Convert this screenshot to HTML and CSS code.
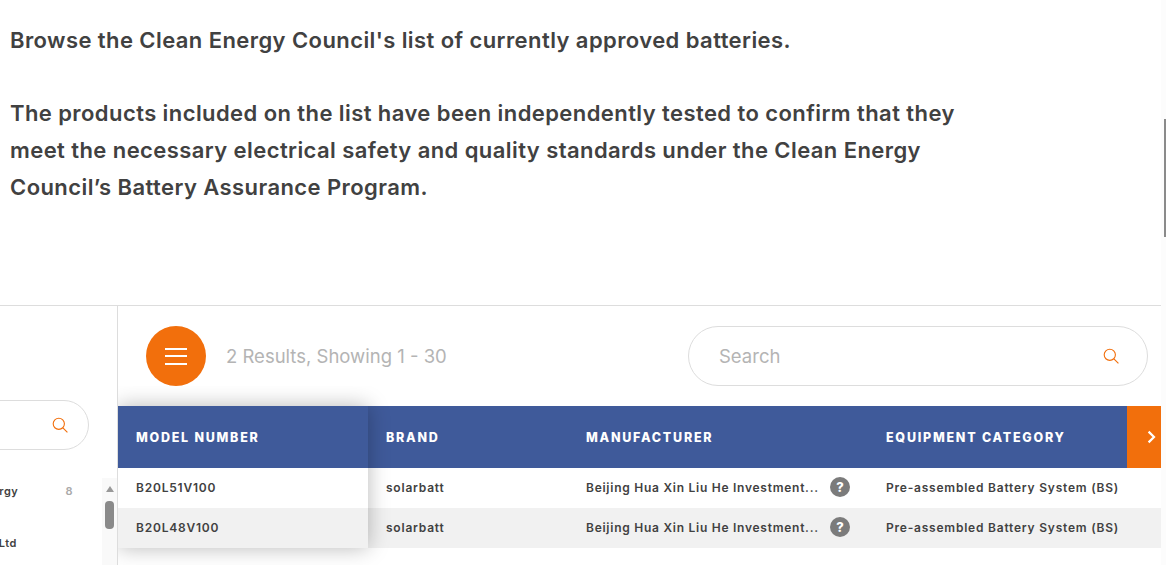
FILE: index.html
```html
<!DOCTYPE html>
<html lang="en">
<head>
<meta charset="utf-8">
<title>Approved batteries</title>
<link rel="stylesheet" href="styles.css">
</head>
<body>
<section class="intro">
  <p>Browse the Clean Energy Council's list of currently approved batteries.</p>
  <p>The products included on the list have been independently tested to confirm that they<br>meet the necessary electrical safety and quality standards under the Clean Energy<br>Council’s Battery Assurance Program.</p>
</section>
<section class="browser">
  <aside class="filters">
    <div class="filter-search">
      <div class="pill pill-left">
        <svg class="search-icon" viewBox="0 0 16 16"><circle cx="6.8" cy="6.8" r="5.6"/><path d="M10.9 10.9 15.4 15.4"/></svg>
      </div>
    </div>
    <div class="filter-body">
      <ul class="filter-list">
        <li class="filter-item"><span class="filter-name">Energy</span><span class="filter-count">8</span></li>
        <li class="filter-item filter-item-second"><span class="filter-name">Co Ltd</span></li>
      </ul>
      <div class="mini-scroll">
        <span class="mini-arrow"></span>
        <span class="mini-thumb"></span>
      </div>
    </div>
  </aside>
  <div class="results">
    <div class="toolbar">
      <div class="toolbar-left">
        <button class="menu-btn" aria-label="Menu"><span></span><span></span><span></span></button>
        <span class="count">2 Results, Showing 1 - 30</span>
      </div>
      <div class="pill pill-main">
        <span class="placeholder">Search</span>
        <svg class="search-icon" viewBox="0 0 16 16"><circle cx="6.8" cy="6.8" r="5.6"/><path d="M10.9 10.9 15.4 15.4"/></svg>
      </div>
    </div>
    <div class="table">
      <div class="row head">
        <div class="cell c1">MODEL NUMBER</div>
        <div class="cell c2">BRAND</div>
        <div class="cell c3">MANUFACTURER</div>
        <div class="cell c4">EQUIPMENT CATEGORY</div>
        <div class="next"><svg viewBox="0 0 10 14"><path d="M1.6 1.6 7 7 1.6 12.4"/></svg></div>
      </div>
      <div class="row">
        <div class="cell c1">B20L51V100</div>
        <div class="cell c2">solarbatt</div>
        <div class="cell c3"><span class="clip">Beijing Hua Xin Liu He Investment...</span><span class="help">?</span></div>
        <div class="cell c4">Pre-assembled Battery System (BS)</div>
      </div>
      <div class="row alt">
        <div class="cell c1">B20L48V100</div>
        <div class="cell c2">solarbatt</div>
        <div class="cell c3"><span class="clip">Beijing Hua Xin Liu He Investment...</span><span class="help">?</span></div>
        <div class="cell c4">Pre-assembled Battery System (BS)</div>
      </div>
      <div class="frozen-shadow"></div>
    </div>
  </div>
</section>
<div class="page-track"><div class="page-thumb"></div></div>
</body>
</html>
```
FILE: styles.css
```css
* { box-sizing: border-box; }
html, body { margin: 0; height: 565px; overflow: hidden; background: #fff; }
body { font-family: "Inter", "Liberation Sans", sans-serif; color: #414141; }

.intro { height: 305px; padding: 22px 0 0 10px; font-size: 22px; line-height: 37px; font-weight: 600; letter-spacing: .42px; }
.intro p { margin: 0 0 36px; }

.browser { display: flex; height: 260px; border-top: 1px solid #ddd; }

.filters { width: 118px; flex: none; border-right: 1px solid #ddd; overflow: hidden; padding-top: 94px; }
.filter-search { display: flex; justify-content: flex-end; padding-right: 28px; }
.pill { display: flex; align-items: center; justify-content: space-between; background: #fff; border: 1px solid #ddd; }
.pill-left { width: 200px; height: 50px; flex: none; border-radius: 25px; justify-content: flex-end; padding-right: 20px; }
.search-icon { width: 16px; height: 16px; fill: none; stroke: #f26f0c; stroke-width: 1.1; }

.filter-body { display: flex; height: 87px; margin-top: 28px; justify-content: flex-end; }
.filter-list { list-style: none; margin: 0; padding: 0; width: 102px; flex: none; overflow: hidden; }
.filter-item { display: flex; justify-content: flex-end; height: 26px; margin-bottom: 26px; padding-right: 29px; align-items: center; font-size: 11px; font-weight: 600; white-space: nowrap; letter-spacing: .55px; }
.filter-item-second { padding-right: 85px; }
.filter-name { flex: none; }
.filter-count { flex: none; margin-left: 47px; color: #aaa; }
.mini-scroll { width: 15px; flex: none; background: #f9f9f9; display: flex; flex-direction: column; align-items: center; padding-top: 8px; }
.mini-arrow { width: 0; height: 0; border-left: 4.5px solid transparent; border-right: 4.5px solid transparent; border-bottom: 6px solid #999; }
.mini-thumb { width: 9px; height: 28px; margin-top: 9px; background: #8a8a8a; border-radius: 4px; }

.results { width: 1043px; flex: none; }
.toolbar { display: flex; justify-content: space-between; padding: 20px 13px 20px 28px; height: 100px; }
.toolbar-left { display: flex; align-items: center; gap: 20px; }
.menu-btn { width: 60px; height: 60px; border: 0; border-radius: 50%; background: #f26f0c; display: flex; flex-direction: column; align-items: center; justify-content: center; gap: 5.5px; padding: 0; }
.menu-btn span { display: block; width: 22px; height: 2px; background: #fff; }
.count { font-size: 18.5px; color: #b4b4b4; font-weight: 400; }
.pill-main { width: 460px; height: 60px; border-radius: 30px; padding: 0 28px 0 30px; }
.placeholder { font-size: 18.5px; color: #b4b4b4; }

.table { position: relative; }
.row { display: flex; height: 40px; align-items: center; padding-bottom: 2px; font-size: 12px; font-weight: 600; letter-spacing: .78px; white-space: nowrap; }
.alt { background: #f1f1f1; }
.head { height: 62px; padding-bottom: 0; background: #3f5a9a; color: #fff; font-size: 12.5px; font-weight: 800; letter-spacing: 1.75px; }
.cell { padding-left: 18px; flex: none; display: flex; align-items: center; }
.c1 { width: 250px; }
.c2 { width: 200px; }
.c3 { width: 300px; }
.c4 { width: 259px; }
.clip { width: 234px; letter-spacing: .74px; }
.help { width: 20px; height: 20px; margin-left: 10px; border-radius: 50%; background: #7b7b7b; color: #fff; font-size: 13px; font-weight: 800; display: flex; align-items: center; justify-content: center; letter-spacing: 0; }
.next { width: 34px; height: 62px; flex: none; background: #f26f0c; display: flex; align-items: center; justify-content: flex-end; padding-right: 4px; }
.next svg { width: 10px; height: 14px; fill: none; stroke: #fff; stroke-width: 2.2; }
.frozen-shadow { position: absolute; left: 0; top: 0; bottom: 0; width: 250px; box-shadow: 0 0 20px rgba(0,0,0,.28); pointer-events: none; clip-path: inset(-20px -30px -30px 0); }

.page-track { position: fixed; right: 0; top: 0; bottom: 0; width: 5px; background: #fcfcfc; }
.page-thumb { margin: 119px 0 0 3px; width: 2px; height: 118px; background: #8a8a8a; }
```
